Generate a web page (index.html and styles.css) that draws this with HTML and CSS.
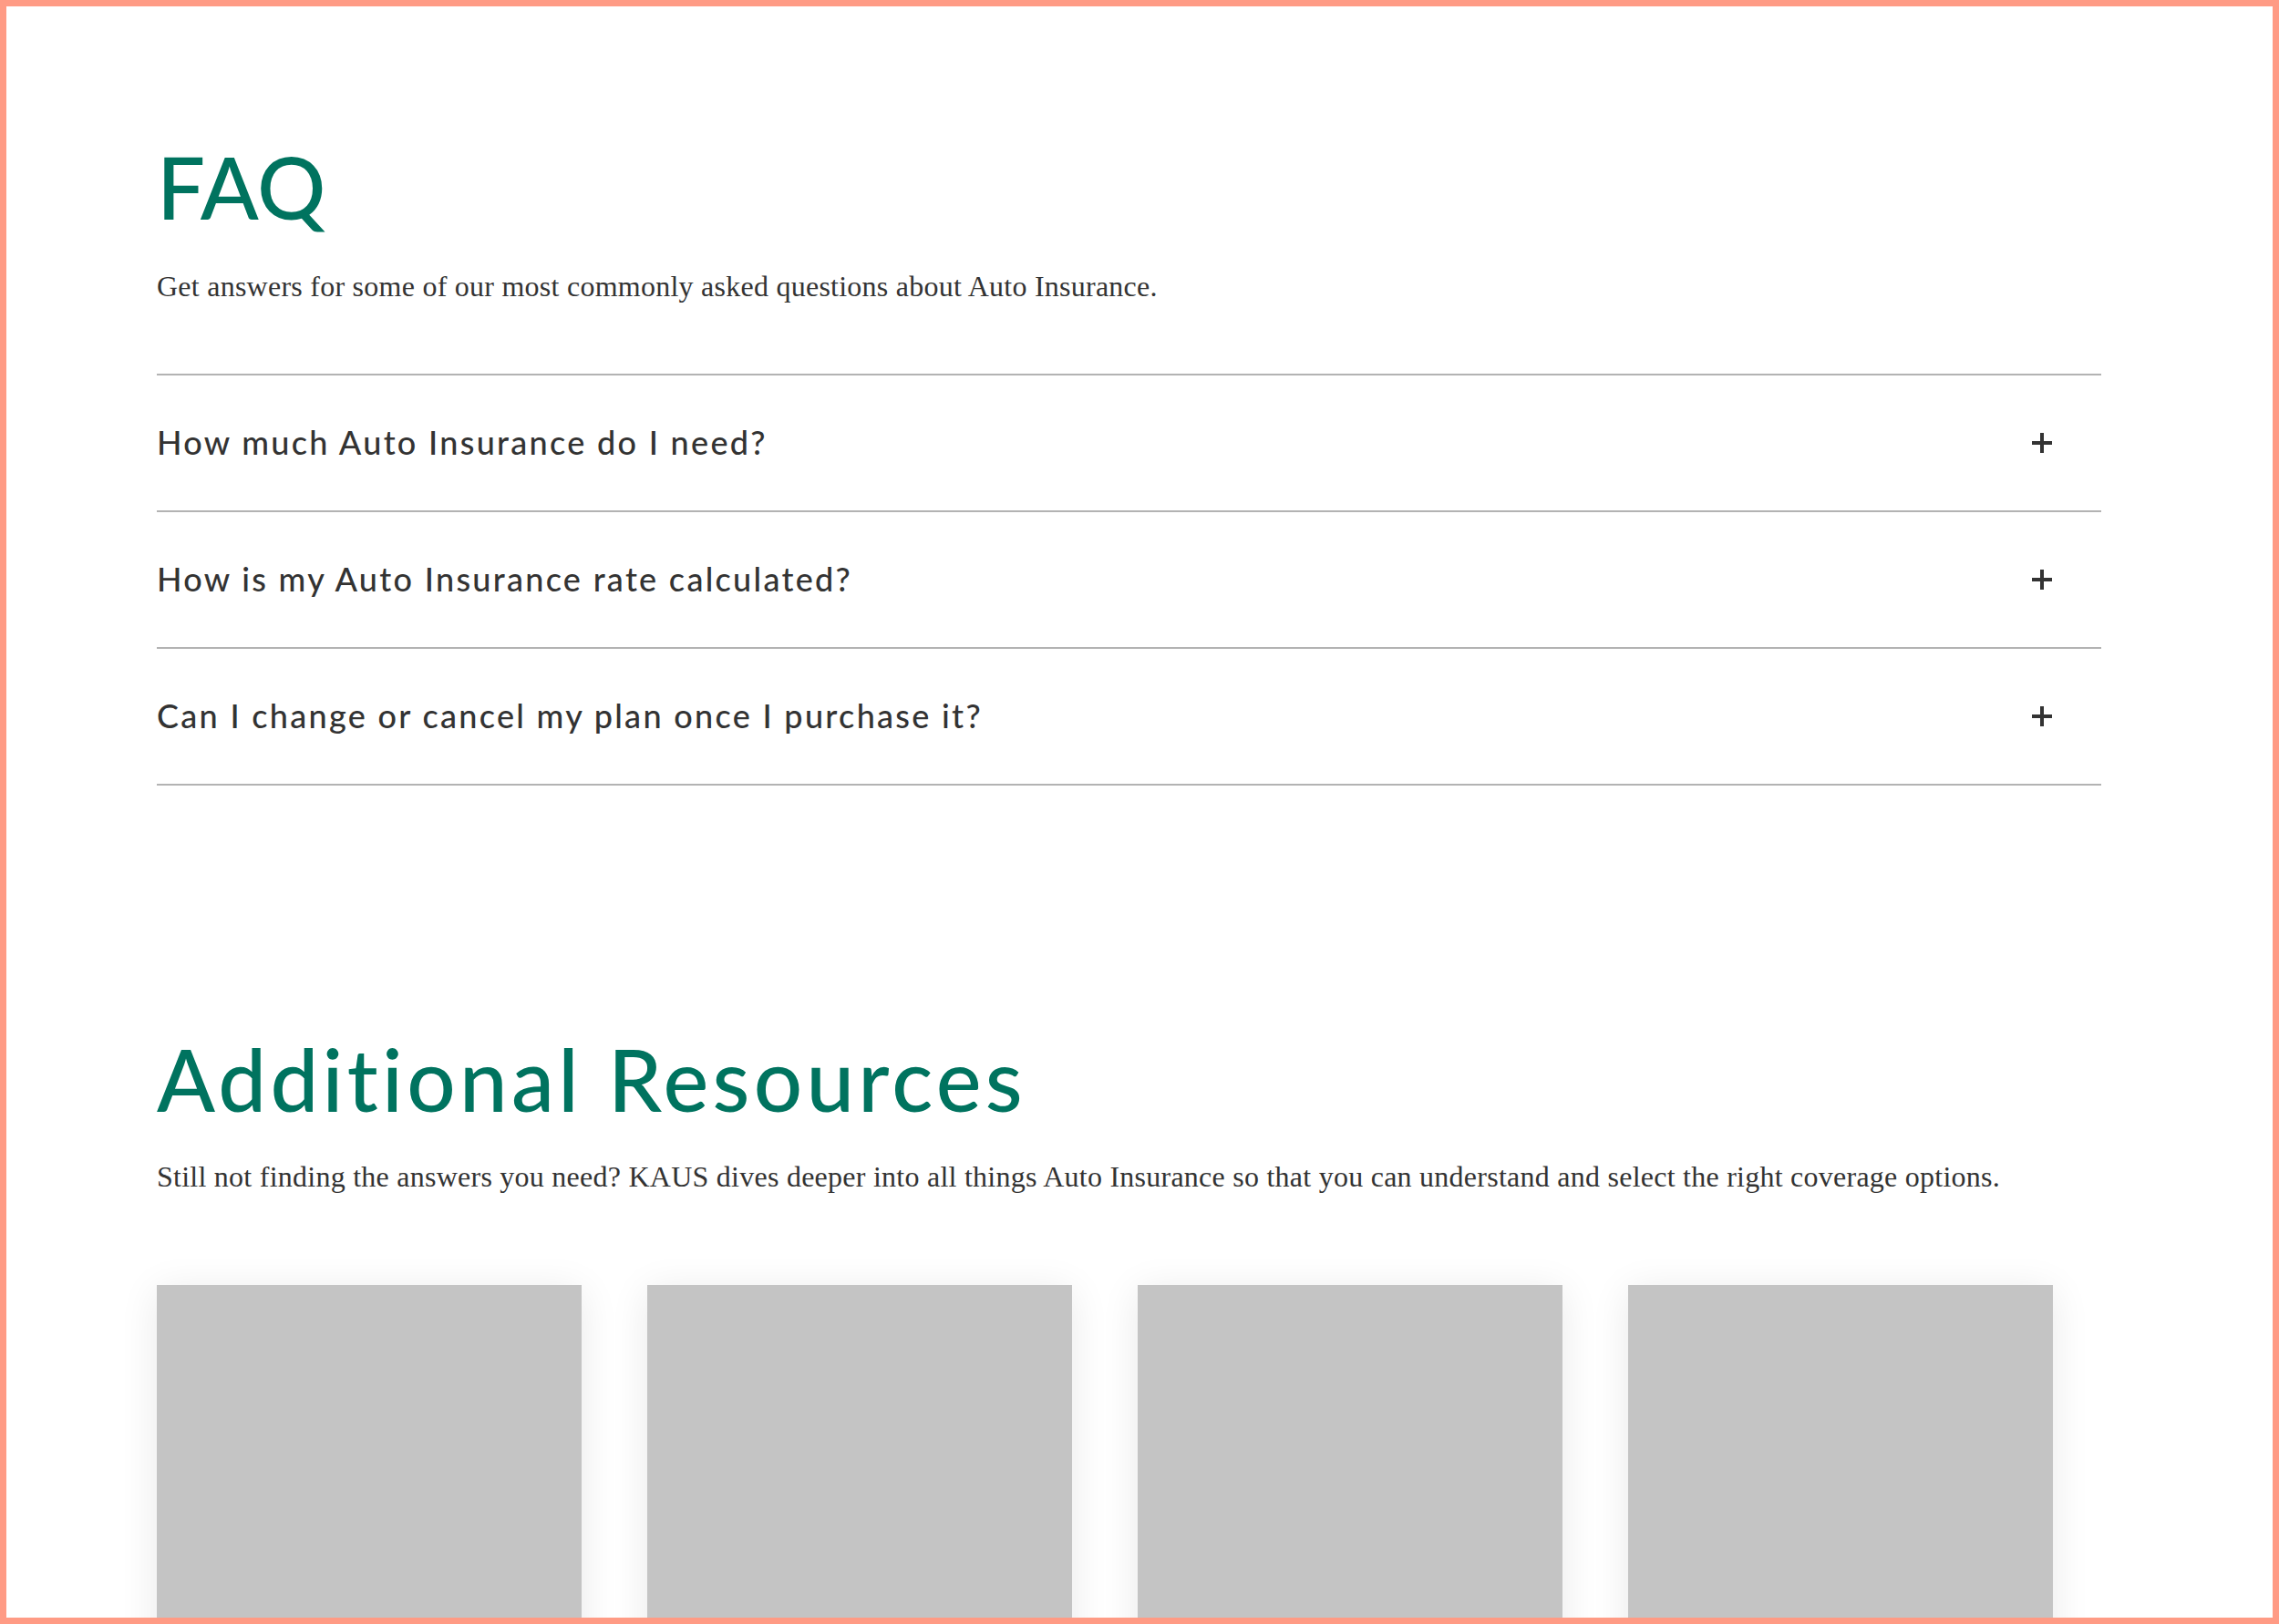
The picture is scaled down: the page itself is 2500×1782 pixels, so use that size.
FILE: index.html
```html
<!DOCTYPE html>
<html lang="en">
<head>
<meta charset="utf-8">
<title>FAQ - Auto Insurance</title>
<link rel="stylesheet" href="styles.css">
</head>
<body>
<div class="frame">
  <section class="faq">
    <h1 class="title">FAQ</h1>
    <p class="lead">Get answers for some of our most commonly asked questions about Auto Insurance.</p>
    <div class="faq-list">
      <div class="faq-item">
        <span class="question">How much Auto Insurance do I need?</span>
        <svg class="plus" viewBox="0 0 22 22" width="22" height="22" aria-hidden="true"><rect x="9" y="0" width="4" height="22"/><rect x="0" y="9" width="22" height="4"/></svg>
      </div>
      <div class="faq-item">
        <span class="question">How is my Auto Insurance rate calculated?</span>
        <svg class="plus" viewBox="0 0 22 22" width="22" height="22" aria-hidden="true"><rect x="9" y="0" width="4" height="22"/><rect x="0" y="9" width="22" height="4"/></svg>
      </div>
      <div class="faq-item">
        <span class="question">Can I change or cancel my plan once I purchase it?</span>
        <svg class="plus" viewBox="0 0 22 22" width="22" height="22" aria-hidden="true"><rect x="9" y="0" width="4" height="22"/><rect x="0" y="9" width="22" height="4"/></svg>
      </div>
    </div>
  </section>
  <section class="resources">
    <h2 class="title">Additional Resources</h2>
    <p class="lead">Still not finding the answers you need? KAUS dives deeper into all things Auto Insurance so that you can understand and select the right coverage options.</p>
    <div class="cards">
      <div class="card"></div>
      <div class="card"></div>
      <div class="card"></div>
      <div class="card"></div>
    </div>
  </section>
</div>
</body>
</html>
```
FILE: styles.css
```css
html, body {
  margin: 0;
  padding: 0;
  background: #ffffff;
}

.frame {
  box-sizing: border-box;
  width: 2500px;
  height: 1782px;
  border: 7px solid #ff9b85;
  overflow: hidden;
  background: #ffffff;
}

.faq,
.resources {
  width: 2133px;
  margin-left: 165px;
}

.faq {
  padding-top: 150.6px;
}

.resources {
  padding-top: 274.6px;
}

.title {
  margin: 0;
  font-family: Lato, "Open Sans", sans-serif;
  font-weight: 500;
  font-size: 94px;
  line-height: 1;
  color: #00735f;
  letter-spacing: 4.3px;
}

.faq .title {
  letter-spacing: 0;
}

.lead {
  margin: 43px 0 0;
  font-family: "Liberation Serif", "DejaVu Serif", serif;
  font-size: 32px;
  line-height: 1.2;
  letter-spacing: 0.25px;
  color: #333333;
}

.resources .lead {
  margin-top: 41px;
}

.faq-list {
  margin-top: 77px;
  border-top: 2px solid #b3b3b3;
}

.faq-item {
  display: flex;
  align-items: center;
  justify-content: space-between;
  height: 148px;
  border-bottom: 2px solid #b3b3b3;
  padding-right: 54px;
}

.question {
  font-family: Lato, "Open Sans", sans-serif;
  font-weight: 500;
  font-size: 36px;
  line-height: 1.2;
  letter-spacing: 2.3px;
  color: #333333;
}

.plus {
  display: block;
  fill: #333333;
  flex: none;
}

.cards {
  display: flex;
  gap: 72px;
  margin-top: 100px;
}

.card {
  width: 466px;
  height: 520px;
  flex: none;
  background: #c4c4c4;
  box-shadow: 0 6px 40px rgba(0, 0, 0, 0.09);
}
```
